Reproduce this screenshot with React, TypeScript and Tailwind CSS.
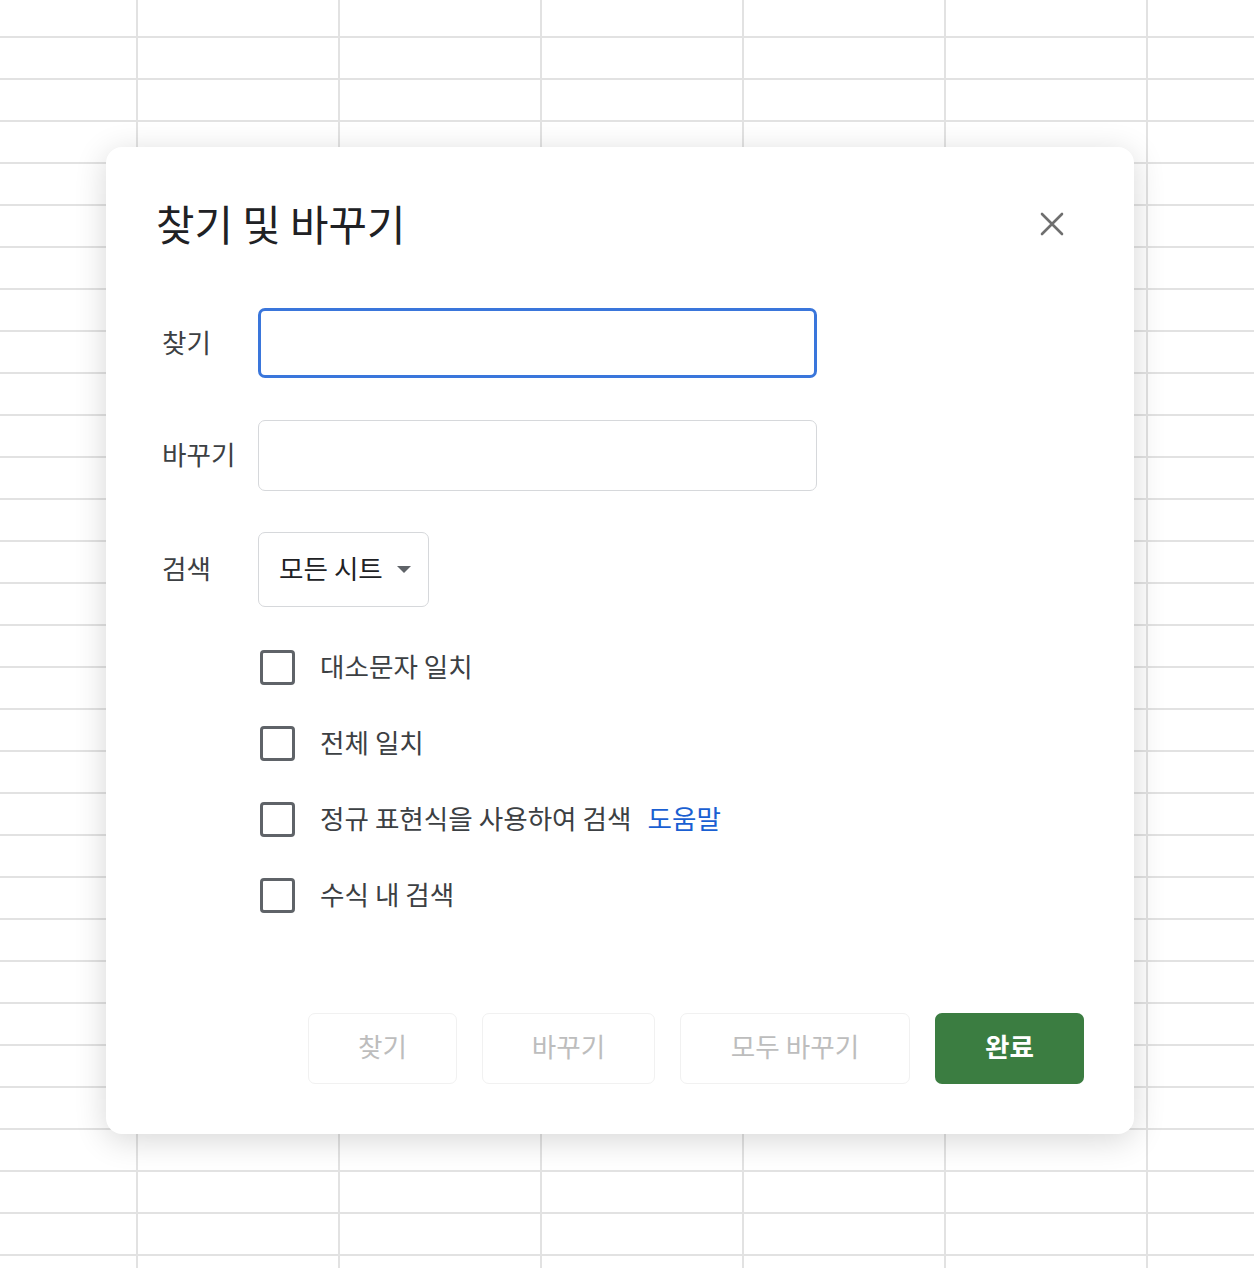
import React from "react";

const FONT = { fontFamily: '"Noto Sans CJK KR", "Noto Sans", sans-serif' };

function Grid() {
  const rows = Array.from({ length: 31 });
  const cols = Array.from({ length: 7 });
  return (
    <div className="absolute inset-0 overflow-hidden flex flex-col">
      {rows.map((_, r) => (
        <div key={r} className={`flex shrink-0 ${r === 0 ? "h-[38px]" : "h-[42px]"}`}>
          {cols.map((_, c) => (
            <div
              key={c}
              className={`shrink-0 h-full border-r-2 border-b-2 border-[#e2e2e2] ${c === 0 ? "w-[138px]" : "w-[202px]"}`}
            />
          ))}
        </div>
      ))}
    </div>
  );
}

function Checkbox({ label, link }: { label: string; link?: string }) {
  return (
    <div className="h-[76px] flex items-center">
      <div className="ml-[2px] w-[35px] h-[35px] border-[3px] border-[#5f6368] rounded-[4px] shrink-0" />
      <span className="ml-[25px] pb-[2px] text-[26.6px] leading-[34px] text-[#3c4043]">{label}</span>
      {link && <span className="ml-[16px] pb-[2px] text-[26.6px] leading-[34px] text-[#1a5fd2]">{link}</span>}
    </div>
  );
}

export default function App() {
  return (
    <div className="relative w-[1254px] h-[1268px] bg-white overflow-hidden" style={FONT}>
      <Grid />
      <div className="absolute left-[106px] top-[147px] w-[1028px] h-[987px] bg-white rounded-[16px] shadow-[0_6px_32px_rgba(0,0,0,0.16)] pl-[50px] pr-[50px] pt-[53px] flex flex-col">
        <div className="h-[48px] flex items-center justify-between">
          <h1 className="text-[41.8px] leading-[48px] pb-[3px] text-[#202124] font-normal">찾기 및 바꾸기</h1>
          <div className="w-[48px] h-[48px] flex items-center justify-center mr-[8px]">
            <svg width="24" height="24" viewBox="0 0 24 24">
              <path d="M2 2 L22 22 M22 2 L2 22" stroke="#6f6f6f" strokeWidth="2.6" strokeLinecap="round" />
            </svg>
          </div>
        </div>

        <div className="mt-[60px] h-[70px] flex items-center">
          <div className="w-[102px] pl-[6px] pb-[3px] text-[26.6px] text-[#3c4043]">찾기</div>
          <div className="w-[559px] h-[70px] border-[3px] border-[#3a76db] rounded-[7px]" />
        </div>

        <div className="mt-[42px] h-[70px] flex items-center">
          <div className="w-[102px] pl-[6px] pb-[3px] text-[26.6px] text-[#3c4043]">바꾸기</div>
          <div className="w-[559px] h-[71px] border border-[#d6d8db] rounded-[7px]" />
        </div>

        <div className="mt-[42px] h-[74px] flex items-center">
          <div className="w-[102px] pl-[6px] pb-[3px] text-[26.6px] text-[#3c4043]">검색</div>
          <div className="h-[75px] border border-[#d6d8db] rounded-[7px] flex items-center pl-[20px] pr-[17px]">
            <span className="pb-[3px] text-[26.6px] text-[#202124]">모든 시트</span>
            <svg className="ml-[14px]" width="14" height="7" viewBox="0 0 14 7">
              <path d="M0 0 L14 0 L7 7 Z" fill="#5f6368" />
            </svg>
          </div>
        </div>

        <div className="mt-[23px] flex flex-col pl-[102px]">
          <Checkbox label="대소문자 일치" />
          <Checkbox label="전체 일치" />
          <Checkbox label="정규 표현식을 사용하여 검색" link="도움말" />
          <Checkbox label="수식 내 검색" />
        </div>

        <div className="mt-[80px] flex justify-end gap-[25px]">
          <div className="w-[149px] h-[71px] pb-[5px] border border-[#f1f1f1] rounded-[7px] flex items-center justify-center text-[26.6px] text-[#bdbdbd]">찾기</div>
          <div className="w-[173px] h-[71px] pb-[5px] border border-[#f1f1f1] rounded-[7px] flex items-center justify-center text-[26.6px] text-[#bdbdbd]">바꾸기</div>
          <div className="w-[230px] h-[71px] pb-[5px] border border-[#f1f1f1] rounded-[7px] flex items-center justify-center text-[26.6px] text-[#bdbdbd]">모두 바꾸기</div>
          <div className="w-[149px] h-[71px] pb-[5px] bg-[#3b7d41] rounded-[7px] flex items-center justify-center text-[26.6px] text-white font-bold">완료</div>
        </div>
      </div>
    </div>
  );
}
